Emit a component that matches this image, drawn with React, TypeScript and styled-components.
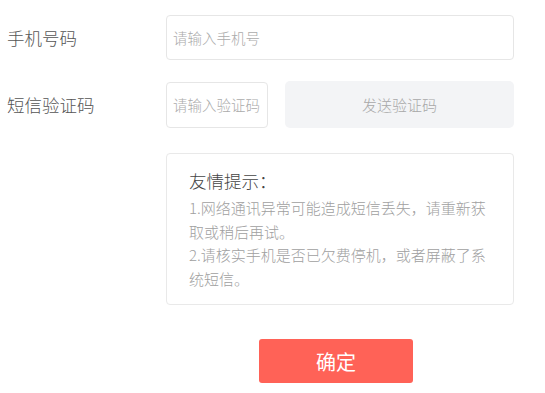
import React from "react";
import styled, { createGlobalStyle } from "styled-components";

const GlobalStyle = createGlobalStyle`
	html, body {
		margin: 0;
		padding: 0;
		background: #ffffff;
		font-family: "Noto Sans CJK SC", "Noto Sans", sans-serif;
	}
	* {
		box-sizing: border-box;
	}
`;

const Page = styled.div`
	padding: 15px 0 0 7px;
`;

const Form = styled.div`
	display: grid;
	grid-template-columns: 159px 348px;
	row-gap: 21px;
	align-items: center;
`;

const Label = styled.div`
	font-size: 17.5px;
	font-weight: 300;
	color: #555555;
	line-height: 24px;
`;

type FieldProps = { $width?: number; $height: number };
const Field = styled.input<FieldProps>`
	width: ${(p) => (p.$width ? `${p.$width}px` : "100%")};
	height: ${(p) => p.$height}px;
	border: 1px solid #e6e6e6;
	border-radius: 4px;
	padding: 0 0 0 6px;
	font-family: inherit;
	font-size: 14.5px;
	font-weight: 300;
	color: #333333;
	outline: none;
	&::placeholder {
		color: #ababab;
	}
`;

const CodeRow = styled.div`
	display: flex;
	align-items: center;
	gap: 17px;
`;

const SendButton = styled.button`
	width: 231px;
	height: 47px;
	border: none;
	border-radius: 5px;
	background: #f3f4f6;
	color: #a8a8a8;
	font-family: inherit;
	font-size: 15px;
	font-weight: 300;
	cursor: pointer;
`;

const Spacer = styled.div``;

const TipBox = styled.div`
	margin-top: 4px;
	height: 152px;
	border: 1px solid #e9e9e9;
	border-radius: 4px;
	padding: 15px 22px 0 22px;
`;

const TipTitle = styled.div`
	font-size: 17.5px;
	font-weight: 300;
	line-height: 24px;
	color: #444444;
	margin-bottom: 3px;
`;

const TipLine = styled.div`
	font-size: 15px;
	font-weight: 300;
	line-height: 23.5px;
	color: #a0a0a0;
`;

const Confirm = styled.button`
	margin: 13px 0 0 93px;
	width: 154px;
	height: 44px;
	border: none;
	border-radius: 3px;
	background: #ff6257;
	color: #ffffff;
	font-family: inherit;
	font-size: 20px;
	cursor: pointer;
`;

export default function App() {
	return (
		<Page>
			<GlobalStyle />
			<Form>
				<Label>手机号码</Label>
				<Field $height={45} placeholder="请输入手机号" />

				<Label>短信验证码</Label>
				<CodeRow>
					<Field $width={102} $height={46} placeholder="请输入验证码" />
					<SendButton>发送验证码</SendButton>
				</CodeRow>

				<Spacer />
				<TipBox>
					<TipTitle>友情提示：</TipTitle>
					<TipLine>1.网络通讯异常可能造成短信丢失，请重新获取或稍后再试。</TipLine>
					<TipLine>2.请核实手机是否已欠费停机，或者屏蔽了系统短信。</TipLine>
				</TipBox>

				<Spacer />
				<div>
					<Confirm>确定</Confirm>
				</div>
			</Form>
		</Page>
	);
}
